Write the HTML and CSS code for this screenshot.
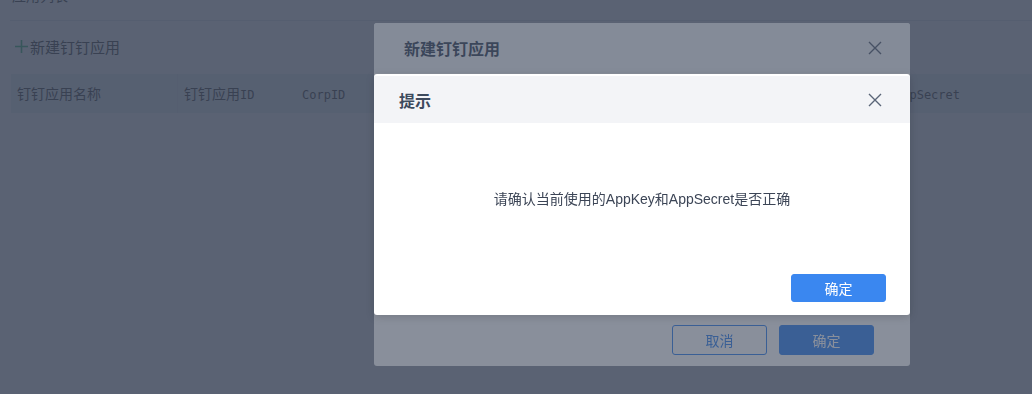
FILE: index.html
```html
<!DOCTYPE html>
<html lang="zh-CN">
<head>
  <meta charset="UTF-8">
  <meta name="viewport" content="width=device-width, initial-scale=1.0">
  <title>钉钉应用管理</title>
  <link rel="stylesheet" href="styles.css">
</head>
<body>
  <div class="page">
    <div class="page-head">应用列表</div>
    <div class="toolbar">
      <svg class="add-icon" width="15" height="15" viewBox="0 0 15 15"><path d="M7.5 1V14M1 7.5H14" stroke="#2fb36b" stroke-width="1.6" fill="none"/></svg>新建钉钉应用
    </div>
    <div class="table-head">
      <div class="cell">钉钉应用名称</div>
      <div class="cell sep">钉钉应用<span class="mono">ID</span></div>
      <div class="cell"><span class="mono">CorpID</span></div>
      <div class="cell"><span class="mono">AppKey</span></div>
      <div class="cell"><span class="mono">AppSecret</span></div>
    </div>
  </div>

  <div class="mask"></div>
  <!-- 新建弹窗 -->
  <div class="dialog dialog-create">
    <div class="dialog-header">
      <span class="dialog-title">新建钉钉应用</span>
      <svg class="close" width="14" height="14" viewBox="0 0 14 14"><path d="M1 1L13 13M13 1L1 13" stroke="#5a6577" stroke-width="1.4" fill="none"/></svg>
    </div>
    <div class="dialog-body"></div>
    <div class="dialog-footer">
      <button class="btn btn-plain">取消</button>
      <button class="btn btn-primary btn-lg">确定</button>
    </div>
  </div>

  <div class="mask"></div>
  <!-- 提示弹窗 -->
  <div class="dialog dialog-tip">
    <div class="dialog-header">
      <span class="dialog-title">提示</span>
      <svg class="close" width="14" height="14" viewBox="0 0 14 14"><path d="M1 1L13 13M13 1L1 13" stroke="#5a6577" stroke-width="1.4" fill="none"/></svg>
    </div>
    <div class="dialog-body tip-body">请确认当前使用的AppKey和AppSecret是否正确</div>
    <div class="dialog-footer tip-footer">
      <button class="btn btn-primary">确定</button>
    </div>
  </div>
</body>
</html>
```

FILE: styles.css
```css
body {
  margin: 0;
  background: #fff;
  font-family: "Liberation Sans", "Noto Sans CJK SC", sans-serif;
  color: #333;
}
.page {
  padding: 0 0 0 10px;
}
.page-head {
  margin-top: -14px;
  height: 34px;
  line-height: 20px;
  font-size: 14px;
  padding-left: 2px;
  border-bottom: 1px solid #e4e7ed;
  color: #333;
}
.toolbar {
  display: flex;
  align-items: center;
  padding: 13px 4px 0;
  height: 24px;
  font-size: 15px;
  color: #333;
}
.add-icon {
  margin-right: 1px;
}
.table-head {
  margin: 16px 0 0 1px;
  height: 39px;
  background: #eceff5;
  display: grid;
  grid-template-columns: 166px 119px 297px 296px 1fr;
  font-family: "Noto Sans CJK SC", sans-serif;
  font-size: 14px;
  color: #333;
}
.table-head .cell {
  padding-left: 6px;
  line-height: 39px;
}
.table-head .sep {
  border-left: 1px solid #e2e6ec;
}
.mono {
  font-family: "DejaVu Sans Mono", "Liberation Mono", monospace;
  font-size: 12px;
}
.mask {
  position: fixed;
  inset: 0;
  background: rgba(59, 69, 88, 0.6);
}
.dialog {
  position: fixed;
  left: 374px;
  width: 536px;
  background: #fff;
  border-radius: 3px;
  display: flex;
  flex-direction: column;
  box-sizing: border-box;
  overflow: hidden;
}
.dialog-header {
  display: flex;
  align-items: center;
  justify-content: space-between;
  background: #f3f4f7;
  padding: 0 28px 0 30px;
}
.dialog-title {
  font-family: "Noto Sans CJK SC", sans-serif;
  font-size: 16px;
  font-weight: bold;
  color: #3d4a5d;
}
.close {
  display: block;
}
.dialog-body {
  flex: 1;
}
.dialog-footer {
  display: flex;
  justify-content: flex-end;
  gap: 12px;
}
.btn {
  width: 95px;
  height: 28px;
  border-radius: 3px;
  font-family: "Noto Sans CJK SC", sans-serif;
  font-size: 14px;
  cursor: pointer;
}
.btn-lg {
  height: 30px;
}
.btn-plain {
  height: 30px;
  background: #fff;
  border: 1px solid #3a87f0;
  color: #3a87f0;
}
.btn-primary {
  background: #3a87f0;
  border: 1px solid #3a87f0;
  color: #fff;
}
.dialog-create {
  top: 23px;
  height: 343px;
}
.dialog-create .dialog-header {
  height: 50px;
}
.dialog-create .dialog-footer {
  padding: 0 36px 11px;
}
.dialog-tip {
  top: 74px;
  height: 241px;
  padding-top: 2px;
  box-shadow: 0 2px 8px rgba(0, 0, 0, 0.15);
}
.dialog-tip .dialog-header {
  height: 47px;
  padding-left: 25px;
}
.tip-body {
  padding-top: 66px;
  line-height: 20px;
  text-align: center;
  font-size: 14px;
  color: #3c4556;
}
.tip-footer {
  padding: 0 24px 13px;
}
```
